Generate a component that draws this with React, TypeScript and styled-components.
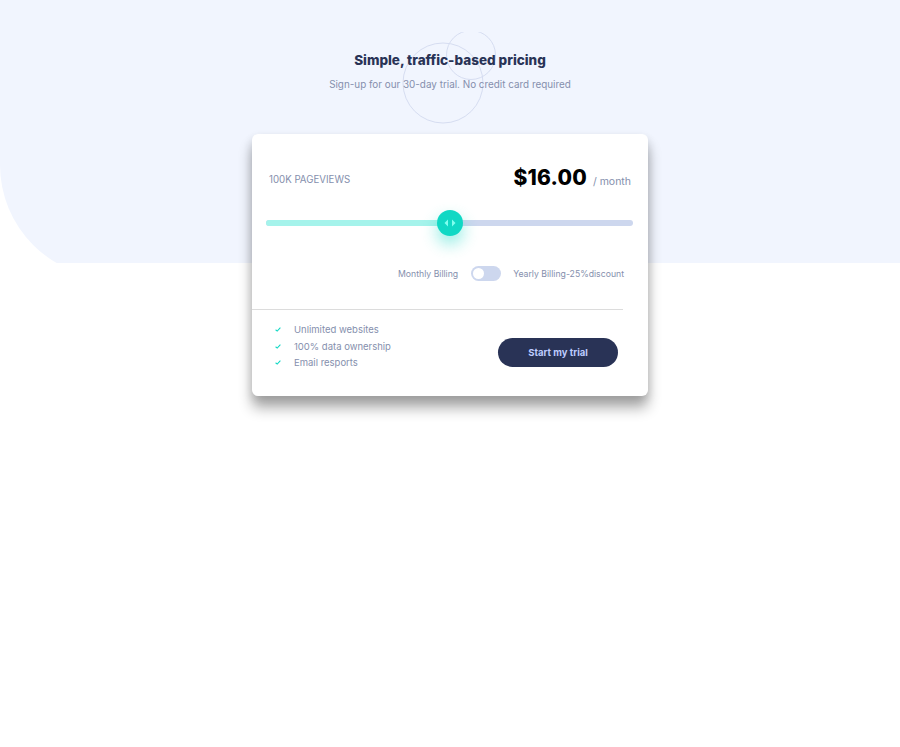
import React from "react";
import styled, { createGlobalStyle } from "styled-components";

const Global = createGlobalStyle`
  html, body { margin: 0; padding: 0; background: #fff; }
  body { font-family: Inter, "Noto Sans", "Liberation Sans", sans-serif; }
  * { box-sizing: border-box; }
`;

const Page = styled.div`
  position: relative;
  width: 100%;
  min-height: 747px;
  display: flex;
  flex-direction: column;
  align-items: center;
  padding-top: 50px;
  overflow: hidden;
`;

const Backdrop = styled.div`
  position: absolute;
  left: 0;
  top: 0;
  right: 0;
  height: 263px;
  overflow: hidden;
  z-index: 0;
  &::after {
    content: "";
    position: absolute;
    left: 0;
    top: 0;
    right: 0;
    height: 278px;
    background: #f1f5fe;
    border-bottom-left-radius: 113px;
  }
`;

const Header = styled.header`
  position: relative;
  z-index: 1;
  display: flex;
  flex-direction: column;
  align-items: center;
`;

const Circles = styled.svg`
  position: absolute;
  left: 50%;
  top: -18px;
  margin-left: -50px;
  pointer-events: none;
`;

const Title = styled.h1`
  position: relative;
  margin: 0;
  font-size: 13.5px;
  line-height: 20px;
  font-weight: 800;
  color: #293356;
`;

const Subtitle = styled.p`
  position: relative;
  margin: 6px 0 0;
  font-size: 9.9px;
  line-height: 16px;
  color: #858fad;
`;

const Card = styled.section`
  position: relative;
  z-index: 1;
  margin-top: 42px;
  width: 396px;
  height: 262px;
  flex-shrink: 0;
  background: #fff;
  border-radius: 6px;
  box-shadow: 0 12px 14px rgba(0, 0, 0, 0.32), 0 4px 10px rgba(0, 0, 0, 0.12);
  display: flex;
  flex-direction: column;
`;

const TopRow = styled.div`
  display: flex;
  align-items: center;
  justify-content: space-between;
  padding: 32px 17px 0;
  height: 59px;
`;

const Views = styled.span`
  font-size: 9.7px;
  letter-spacing: 0;
  color: #858fad;
`;

const PriceBox = styled.div`
  display: flex;
  align-items: baseline;
  gap: 6px;
  margin-bottom: 4px;
`;

const Price = styled.span`
  font-size: 21px;
  font-weight: 800;
  letter-spacing: 0.2px;
  color: #000;
`;

const Per = styled.span`
  font-size: 10.5px;
  color: #858fad;
`;

const SliderWrap = styled.div`
  position: relative;
  margin: 27px 15px 0 14px;
  height: 6px;
  border-radius: 3px;
  background: #cdd7ee;
`;

const Fill = styled.div`
  height: 100%;
  border-radius: 3px;
  background: #a5f3eb;
`;

const Thumb = styled.div`
  position: absolute;
  top: 50%;
  width: 26px;
  height: 26px;
  margin: -13px 0 0 -13px;
  border-radius: 50%;
  background: #10d8c4;
  box-shadow: 0 8px 16px rgba(16, 216, 196, 0.45);
  display: flex;
  align-items: center;
  justify-content: center;
`;

const BillingRow = styled.div`
  display: flex;
  align-items: center;
  justify-content: flex-end;
  gap: 12.5px;
  padding: 0 24px 0 0;
  margin-top: 40px;
  font-size: 8.7px;
  color: #858fad;
`;

const Toggle = styled.div`
  width: 30px;
  height: 15px;
  border-radius: 8px;
  background: #cdd7ee;
  padding: 2px;
  display: flex;
  align-items: center;
`;

const Knob = styled.div`
  width: 11px;
  height: 11px;
  border-radius: 50%;
  background: #fff;
`;

const Divider = styled.hr`
  margin: 28px 25px 0 0;
  border: none;
  border-top: 1px solid #dcdcdc;
`;

const Bottom = styled.div`
  display: flex;
  align-items: flex-start;
  justify-content: space-between;
  padding: 13px 30px 0 23px;
`;

const Features = styled.ul`
  list-style: none;
  margin: 0;
  padding: 0;
  display: flex;
  flex-direction: column;
  gap: 3px;
`;

const Feature = styled.li`
  display: flex;
  align-items: center;
  gap: 13px;
  font-size: 9.5px;
  line-height: 13.5px;
  color: #858fad;
`;

const Button = styled.button`
  width: 120px;
  height: 29px;
  border: none;
  border-radius: 15px;
  background: #293356;
  color: #bdccff;
  font-family: inherit;
  font-size: 9.5px;
  font-weight: 700;
  margin-top: 15px;
`;

const Check = () => (
  <svg width="6" height="5" viewBox="0 0 6 5">
    <path d="M0.6 2.8 L2.2 4.1 L5.4 0.6" fill="none" stroke="#10d8c4" strokeWidth="1.1" />
  </svg>
);

export default function App() {
  return (
    <>
      <Global />
      <Page>
        <Backdrop />
        <Header>
          <Circles width="100" height="100" viewBox="0 0 100 100">
            <circle cx="43" cy="51" r="40" fill="none" stroke="#d6ddf1" strokeWidth="1" />
            <circle cx="71" cy="23" r="24.5" fill="none" stroke="#d6ddf1" strokeWidth="1" />
          </Circles>
          <Title>Simple, traffic-based pricing</Title>
          <Subtitle>Sign-up for our 30-day trial. No credit card required</Subtitle>
        </Header>
        <Card>
          <TopRow>
            <Views>100K PAGEVIEWS</Views>
            <PriceBox>
              <Price>$16.00</Price>
              <Per>/ month</Per>
            </PriceBox>
          </TopRow>
          <SliderWrap>
            <Fill style={{ width: "50%" }} />
            <Thumb style={{ left: "50%" }}>
              <svg width="12" height="8" viewBox="0 0 12 8">
                <path d="M4 0.5 L0.5 4 L4 7.5 Z" fill="#80ffef" />
                <path d="M8 0.5 L11.5 4 L8 7.5 Z" fill="#80ffef" />
              </svg>
            </Thumb>
          </SliderWrap>
          <BillingRow>
            <span>Monthly Billing</span>
            <Toggle>
              <Knob />
            </Toggle>
            <span>Yearly Billing-25%discount</span>
          </BillingRow>
          <Divider />
          <Bottom>
            <Features>
              <Feature><Check />Unlimited websites</Feature>
              <Feature><Check />100% data ownership</Feature>
              <Feature><Check />Email resports</Feature>
            </Features>
            <Button>Start my trial</Button>
          </Bottom>
        </Card>
      </Page>
    </>
  );
}
